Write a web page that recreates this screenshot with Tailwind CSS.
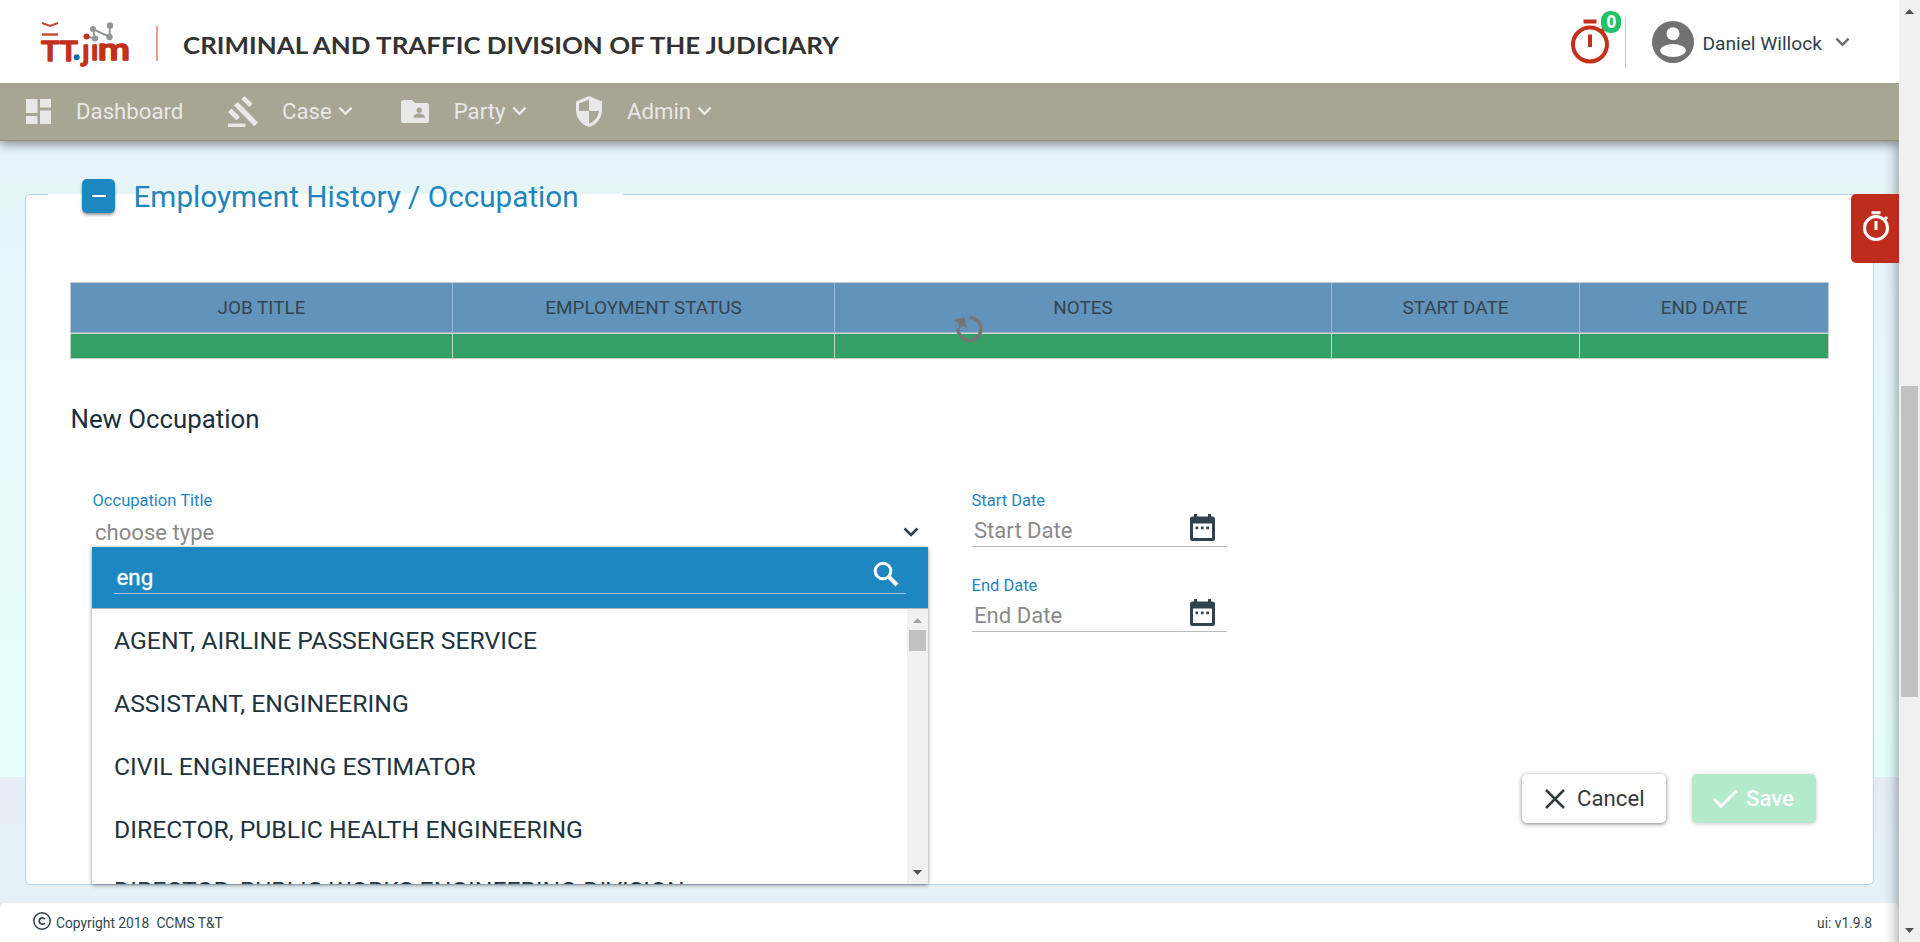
<!DOCTYPE html>
<html lang="en">
<head>
<meta charset="utf-8">
<title>TT.jim - Employment History / Occupation</title>
<script src="https://cdn.jsdelivr.net/npm/@tailwindcss/browser@4"></script>
</head>
<body class="flex h-[942px] w-[1920px] overflow-hidden font-['Roboto',sans-serif] text-[#1e3340]">
<svg class="hidden">
  <symbol id="chev" viewBox="0 0 16 10"><path d="M1.5 1.5 8 8l6.5-6.5" fill="none" stroke="currentColor" stroke-width="2.6"/></symbol>
  <symbol id="cal" viewBox="0 0 25 28"><path fill="currentColor" fill-rule="evenodd" d="M4 0h3v2.500h11V0h3v2.500h1.500a2.500 2.500 0 0 1 2.500 2.500v19.500a2.500 2.500 0 0 1-2.500 2.500h-20a2.500 2.500 0 0 1-2.500-2.500V5a2.500 2.500 0 0 1 2.500-2.500H4zM3 9.500v14.500h19V9.500zM5.500 12.500h2.700v2.700H5.500zm5.400 0h2.700v2.700h-2.700zm5.400 0h2.700v2.700h-2.700z"/></symbol>
</svg>

<div class="relative flex h-full w-[1899px] flex-col bg-[#e5f1f6]">
  <header class="relative z-20 flex h-[83px] shrink-0 items-center bg-white">
    <svg class="h-[83px] w-[860px]" viewBox="0 0 860 83">
      <path d="M42 23l8 3 8-3" fill="none" stroke="#c9453a" stroke-width="2"/>
      <path d="M42 34.500h16" stroke="#c9453a" stroke-width="2.400"/>
      <g stroke="#939699" stroke-width="2" fill="none"><path d="M87 37l8 1-2-9 16.500 8 .5-12"/></g>
      <g fill="#939699"><circle cx="93" cy="29" r="3"/><circle cx="110" cy="25.500" r="3.200"/><circle cx="95" cy="38.500" r="3"/><circle cx="109.500" cy="37" r="3.200"/></g>
      <g fill="#c3301c" stroke="#c3301c" stroke-width="1.500" stroke-linejoin="round" font-family="Roboto, sans-serif" font-weight="500">
        <text x="41" y="60.500" font-size="28" textLength="37" lengthAdjust="spacingAndGlyphs">TT</text>
        <text x="82" y="60" font-size="28">&#567;</text>
        <text x="91" y="60" font-size="28">&#305;</text>
        <text x="98" y="60" font-size="30" textLength="32" lengthAdjust="spacingAndGlyphs">m</text>
      </g>
      <circle cx="86.500" cy="36.500" r="3" fill="#c3301c"/>
      <circle cx="76.700" cy="57.300" r="3" fill="#0c6cb4"/>
      <path d="M157 26v35" stroke="#eb9a8f" stroke-width="2"/>
      <text x="183" y="53.600" font-family="Lato, sans-serif" font-weight="700" font-size="22.500" fill="#333" textLength="656" lengthAdjust="spacingAndGlyphs">CRIMINAL AND TRAFFIC DIVISION OF THE JUDICIARY</text>
    </svg>
    <div class="ml-auto mr-[49px] flex items-center pt-px">
      <div class="relative flex h-[51px] w-[55px] items-center border-r border-[#c8c8c8]">
        <svg class="h-[46px] w-[40px]" viewBox="0 0 40 46"><g fill="none" stroke="#c3301c" stroke-width="4"><circle cx="19" cy="25.500" r="17"/><path d="M12.500 2.500h13M19 15.500v12.500M30 13l4-4"/></g></svg>
        <span class="absolute left-[30px] -top-[6px] flex h-[22px] w-[20px] items-center justify-center rounded-[9px] bg-[#26c067] font-['Open_Sans',sans-serif] text-[17px] font-bold text-white">0</span>
      </div>
      <svg class="ml-[26px] size-[42px]" viewBox="0 0 42 42"><circle cx="21" cy="21" r="21" fill="#717171"/><circle cx="21" cy="12.700" r="6.500" fill="#fff"/><ellipse cx="21" cy="29.500" rx="12.800" ry="6.500" fill="#fff"/></svg>
      <span class="ml-[8px] mt-[3px] text-[19.200px] leading-6 whitespace-nowrap text-[#2b414d]">Daniel Willock</span>
      <svg class="ml-[13px] h-[10px] w-[15px] -mt-px text-[#6a6a6a]"><use href="#chev"/></svg>
    </div>
  </header>

  <nav class="relative z-10 flex h-[58px] shrink-0 items-center border-b border-[#979070] bg-[#a7a594] pl-[26px] text-[22.200px] leading-7 text-[#e8e8e8] shadow-[0_3px_10px_rgba(0,0,0,0.45)]">
    <svg class="size-[25px]" viewBox="0 0 25 25" fill="currentColor"><path d="M0 0h11.500v14H0zM14 0h11v8.500H14zM14 11.500h11V25H14zM0 17h11.500v8H0z"/></svg>
    <span class="-mt-[2px] ml-[25px] w-[152px]">Dashboard</span>
    <svg class="h-[32px] w-[31px]" viewBox="0 0 31 32" fill="currentColor"><path d="M0 27.500h17.500V31H0zM16.500 0l8 7.800-3.200 3.200-8-7.800zM3.500 12.500l8.500 8.500-3.500 3.300-8.500-8.300zM9.500 6l4.500 4 16 16.500-3.800 3.800L6 9.500z"/></svg>
    <span class="-mt-[2px] ml-[23px] whitespace-nowrap">Case</span><svg class="-mt-[2px] ml-[6px] h-[10px] w-[15px]"><use href="#chev"/></svg>
    <svg class="ml-[48px] h-[23px] w-[28px]" viewBox="0 0 28 23"><path fill="currentColor" fill-rule="evenodd" d="M2.500 0h8.500l3 3h11.500a2.500 2.500 0 0 1 2.500 2.500v15a2.500 2.500 0 0 1-2.500 2.500h-23a2.500 2.500 0 0 1-2.500-2.500v-18a2.500 2.500 0 0 1 2.500-2.500zM18.200 7.600a2.700 2.700 0 1 0 .01 0zM12.700 17.800h11v-1.300c0-1.900-3.600-2.900-5.500-2.900s-5.500 1-5.500 2.900z"/></svg>
    <span class="-mt-[2px] ml-[25px] whitespace-nowrap">Party</span><svg class="-mt-[2px] ml-[6px] h-[10px] w-[15px]"><use href="#chev"/></svg>
    <svg class="ml-[49px] h-[31px] w-[26px]" viewBox="0 0 26 31"><path fill="currentColor" fill-rule="evenodd" d="M13 0l13 5.500v8.500c0 8-5.500 15-13 17-7.500-2-13-9-13-17V5.500zM13 3.500L3 7.500V15h10zM13 15v12.500c5.500-1.700 9.500-6.800 10-12.500z"/></svg>
    <span class="-mt-[2px] ml-[25.500px] whitespace-nowrap">Admin</span><svg class="-mt-[2px] ml-[6px] h-[10px] w-[15px]"><use href="#chev"/></svg>
  </nav>

  <main class="relative h-[762px] shrink-0 bg-[linear-gradient(to_bottom,#e6f3fa_0,#e6f3fa_30px,#e6f5f5_54px,#e6f5fb_80px,#e6fffa_636px,#e6ecf5_636px,#e5f1f6_730px,#e5f1f6_100%)] px-[25px] pt-[53px]">
    <section class="relative flex h-[691px] flex-col rounded-[5px] border border-[#b6d6ee] bg-white pl-[44px] pr-[45px]">
      <span class="absolute left-[22px] -top-px h-px w-[575px] bg-white"></span>
      <div class="relative -mt-[16px] flex h-[34px] items-center pl-[12px]">
        <button class="flex h-[34px] w-[33px] items-center justify-center rounded-[5px] bg-[#1c87c0] shadow-[0_2px_3px_rgba(0,0,0,0.4)]"><span class="h-[2px] w-[14px] bg-white"></span></button>
        <h2 class="ml-[18.500px] mt-px text-[29.700px] leading-8 whitespace-nowrap text-[#1f85c0]">Employment History / Occupation</h2>
      </div>

      <div class="relative mt-[69px] h-[77px] w-[1759px] border border-[#c6cbce] text-[18.900px] leading-6 text-[#36444f]">
        <div class="grid h-[50px] grid-cols-[382px_382px_497px_248px_248px] border-b border-[#9db3c5] bg-[#6293ba]">
          <div class="flex items-center justify-center border-r border-[#9db8cf]">JOB TITLE</div>
          <div class="flex items-center justify-center border-r border-[#9db8cf]">EMPLOYMENT STATUS</div>
          <div class="flex items-center justify-center border-r border-[#9db8cf]">NOTES</div>
          <div class="flex items-center justify-center border-r border-[#9db8cf]">START DATE</div>
          <div class="flex items-center justify-center">END DATE</div>
        </div>
        <div class="grid h-[25px] grid-cols-[382px_382px_497px_248px_248px] border-t border-[#cfd6d2] bg-[#35a066]">
          <div class="border-r border-[#b9dcc8]"></div><div class="border-r border-[#b9dcc8]"></div><div class="border-r border-[#b9dcc8]"></div><div class="border-r border-[#b9dcc8]"></div><div></div>
        </div>
        <svg class="absolute left-[882px] top-[32px] h-[29px] w-[31px]" viewBox="0 0 31 29"><path d="M16.500 2.300A11.500 11.500 0 1 1 5 13" fill="none" stroke="#757575" stroke-width="3.200"/><path d="M.5 5L11.500 2l2.500 11-4-2.500-3.500 3.500-1.500-6z" fill="#757575"/></svg>
      </div>

      <h3 class="mt-[45px] pl-[0.500px] text-[25.800px] leading-[31px] text-[#1b2f3b]">New Occupation</h3>

      <div class="mt-[55px] flex gap-[43px] pl-[22px]">
        <div class="relative w-[836px]">
          <label class="block h-[20px] pl-[0.500px] pt-px text-[16.500px] leading-5 text-[#1f85c0]">Occupation Title</label>
          <div class="flex h-[37px] items-center justify-between pl-[3px] pr-[9px] pt-[7px] text-[22.100px] leading-7 text-[#8a8a8a]">choose type
            <svg class="h-[10px] w-[16px] text-[#2b414d]"><use href="#chev"/></svg>
          </div>
          <div class="absolute left-0 top-[57px] z-20 h-[337px] w-[836px] bg-white shadow-[0_1px_4px_rgba(0,0,0,0.45)]">
            <div class="h-[62px] border-b border-[#b0b5b9] bg-[#1c87c0] px-[22px] pt-[11px]">
              <div class="flex h-[36px] items-center justify-between border-b border-[#a9c4d6] pl-[2.500px] pr-[7px] text-[22.300px] leading-7 text-white"><span class="pt-[3px] [-webkit-text-stroke:0.4px_white]">eng</span>
                <svg class="-mt-[3px] size-[26px]" viewBox="0 0 26 26"><g fill="none" stroke="#fff"><circle cx="10" cy="10" r="7.800" stroke-width="3"/><path d="M15.500 15.500l8.500 8.500" stroke-width="4"/></g></svg>
              </div>
            </div>
            <div class="flex h-[275px]">
              <ul class="h-[275px] flex-1 overflow-hidden pl-[22px] pt-px text-[24.740px] leading-[62.900px] whitespace-nowrap text-[#1e3340]">
                <li>AGENT, AIRLINE PASSENGER SERVICE</li>
                <li>ASSISTANT, ENGINEERING</li>
                <li>CIVIL ENGINEERING ESTIMATOR</li>
                <li>DIRECTOR, PUBLIC HEALTH ENGINEERING</li>
                <li class="-mt-[2px]">DIRECTOR, PUBLIC WORKS ENGINEERING DIVISION</li>
              </ul>
              <div class="flex w-[21px] flex-col items-center bg-[#f0f0f0] pb-[9px] pt-[9px]">
                <svg class="h-[5px] w-[9px]" viewBox="0 0 9 5"><path d="M4.500 0L9 5H0z" fill="#a3a3a3"/></svg>
                <span class="mt-[7px] h-[21px] w-[17px] bg-[#c1c1c1]"></span>
                <svg class="mt-auto h-[5px] w-[9px]" viewBox="0 0 9 5"><path d="M4.500 5L9 0H0z" fill="#505050"/></svg>
              </div>
            </div>
          </div>
        </div>
        <div class="flex w-[256px] flex-col gap-[28px]">
          <div>
            <label class="block h-[20px] pl-[0.500px] pt-px text-[16.500px] leading-5 text-[#1f85c0]">Start Date</label>
            <div class="ml-px flex h-[37px] items-center justify-between border-b border-[#b9b9b9] pl-[2px] pr-[12px] text-[22.100px] leading-7 text-[#8a8a8a]"><span class="pt-[4px]">Start Date</span><svg class="h-[28px] w-[25px] text-[#2f434e]"><use href="#cal"/></svg></div>
          </div>
          <div>
            <label class="block h-[20px] pl-[0.500px] pt-px text-[16.500px] leading-5 text-[#1f85c0]">End Date</label>
            <div class="ml-px flex h-[37px] items-center justify-between border-b border-[#b9b9b9] pl-[2px] pr-[12px] text-[22.100px] leading-7 text-[#8a8a8a]"><span class="pt-[4px]">End Date</span><svg class="h-[28px] w-[25px] text-[#2f434e]"><use href="#cal"/></svg></div>
          </div>
        </div>
      </div>

      <div class="mb-[61px] mr-[12px] mt-auto flex justify-end gap-[26px] text-[22.200px] leading-7">
        <button class="flex h-[49px] w-[144px] items-center rounded-[5px] bg-white pl-[23px] text-[#333a3e] shadow-[0_1px_4px_rgba(0,0,0,0.5)]"><svg class="size-[20px]" viewBox="0 0 20 20"><path d="M1 1l18 18M19 1L1 19" stroke="currentColor" stroke-width="2.500"/></svg><span class="-mt-[2px] ml-[12px]">Cancel</span></button>
        <button class="flex h-[49px] w-[124px] items-center rounded-[5px] bg-[#b2eacb] pl-[21px] font-medium text-white shadow-[0_1px_4px_rgba(0,0,0,0.2)]"><svg class="h-[19px] w-[25px]" viewBox="0 0 25 19"><path d="M1 10l7 7L24 1.500" fill="none" stroke="currentColor" stroke-width="3"/></svg><span class="-mt-[2px] ml-[8px]">Save</span></button>
      </div>
    </section>
    <button class="absolute right-0 top-[53px] z-30 flex h-[69px] w-[48px] justify-center rounded-l-[5px] bg-[#be2c1b] pl-[2px] pt-[17px]"><svg class="h-[30px] w-[26px]" viewBox="0 0 26 30"><g fill="none" stroke="#fff"><circle cx="13" cy="17" r="11.500" stroke-width="3"/><path d="M8.500 1.800h9M13 10v9M21 9l3-3" stroke-width="3"/></g></svg></button>
  </main>

  <footer class="flex flex-1 items-center rounded-t-[4px] bg-white pl-[33px] pr-[27px] text-[13.800px] leading-4 text-[#33474f] shadow-[0_-1px_2px_rgba(0,0,0,0.12)]">
    <svg class="-mt-[4px] size-[18px]" viewBox="0 0 18 18" fill="none" stroke="#2b414d"><circle cx="9" cy="9" r="8.200" stroke-width="1.500"/><path d="M11.800 7.200A3.100 3.100 0 1 0 11.800 10.900" stroke-width="1.700"/></svg>
    <span class="ml-[5px] mt-px">Copyright 2018</span><span class="ml-[7px] mt-px">CCMS T&amp;T</span>
    <span class="ml-auto mt-px">ui: v1.9.8</span>
  </footer>
  <div class="pointer-events-none absolute bottom-0 right-0 top-[141px] w-[16px] bg-[linear-gradient(to_right,transparent,rgba(0,0,0,0.06)_50%,rgba(0,0,0,0.23))]"></div>
</div>

<aside class="relative z-30 flex h-full w-[21px] flex-col items-center bg-[#f0f0f0] pb-[9px] pt-[9px]">
  <svg class="h-[5px] w-[9px]" viewBox="0 0 9 5"><path d="M4.500 0L9 5H0z" fill="#505050"/></svg>
  <span class="mt-[372px] h-[311px] w-[17px] bg-[#c1c1c1]"></span>
  <svg class="mt-auto h-[5px] w-[9px]" viewBox="0 0 9 5"><path d="M4.500 5L9 0H0z" fill="#505050"/></svg>
</aside>
</body>
</html>
